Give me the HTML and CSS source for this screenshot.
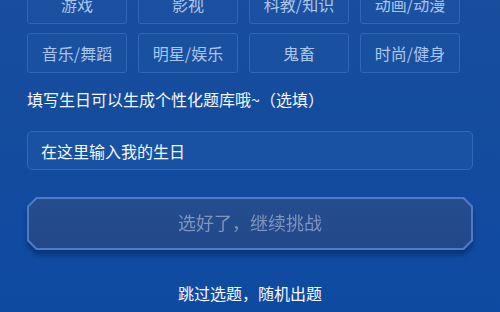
FILE: index.html
```html
<!DOCTYPE html>
<html lang="zh">
<head>
<meta charset="utf-8">
<link rel="stylesheet" href="styles.css">
</head>
<body>
<div class="page">
  <div class="tags">
    <div class="tag">游戏</div>
    <div class="tag">影视</div>
    <div class="tag">科教/知识</div>
    <div class="tag">动画/动漫</div>
    <div class="tag">音乐/舞蹈</div>
    <div class="tag">明星/娱乐</div>
    <div class="tag">鬼畜</div>
    <div class="tag">时尚/健身</div>
  </div>
  <div class="label">填写生日可以生成个性化题库哦~（选填）</div>
  <div class="input">在这里输入我的生日</div>
  <div class="btn-wrap">
    <div class="btn-border">
      <div class="btn">选好了，继续挑战</div>
    </div>
  </div>
  <div class="skip">跳过选题，随机出题</div>
</div>
</body>
</html>
```
FILE: styles.css
```css
html, body {
  margin: 0;
  padding: 0;
  width: 500px;
  height: 312px;
  overflow: hidden;
}
body {
  background: linear-gradient(180deg, #184e9c 0%, #134b9e 50%, #0f4aa2 100%);
  font-family: "Noto Sans CJK SC", "Noto Sans", sans-serif;
  color: #fff;
}
.page {
  padding: 0 27px;
  display: flex;
  flex-direction: column;
}
.tags {
  margin-top: -16px;
  width: 433px;
  display: grid;
  grid-template-columns: repeat(4, 100px);
  column-gap: 11px;
  row-gap: 9px;
}
.tag {
  height: 40px;
  box-sizing: border-box;
  border: 1px solid #3066b3;
  border-radius: 3px;
  background: rgba(40, 90, 170, 0.25);
  display: flex;
  align-items: center;
  justify-content: center;
  font-size: 16px;
  color: #aac6ee;
}
.label {
  margin-top: 15px;
  font-size: 16px;
  line-height: 22px;
  color: #f2f6ff;
}
.input {
  margin-top: 21px;
  height: 39px;
  box-sizing: border-box;
  border: 1px solid #3468b6;
  border-radius: 5px;
  background: rgba(40, 95, 175, 0.3);
  padding-left: 13px;
  display: flex;
  align-items: center;
  font-size: 16px;
  color: #f4f8ff;
}
.btn-wrap {
  margin-top: 27px;
  filter: drop-shadow(0 5px 2px rgba(6, 35, 90, 0.55));
}
.btn-border {
  height: 53px;
  background: #4b7cc6;
  clip-path: polygon(9px 0, calc(100% - 9px) 0, 100% 9px, 100% calc(100% - 9px), calc(100% - 9px) 100%, 9px 100%, 0 calc(100% - 9px), 0 9px);
  padding: 2px;
  box-sizing: border-box;
}
.btn {
  height: 100%;
  background: linear-gradient(180deg, #254d8e 0%, #22488a 100%);
  clip-path: polygon(8px 0, calc(100% - 8px) 0, 100% 8px, 100% calc(100% - 8px), calc(100% - 8px) 100%, 8px 100%, 0 calc(100% - 8px), 0 8px);
  display: flex;
  align-items: center;
  justify-content: center;
  padding-bottom: 3px;
  box-sizing: border-box;
  font-size: 18px;
  color: #7d94bf;
}
.skip {
  margin-top: 32px;
  text-align: center;
  font-size: 16px;
  line-height: 22px;
  color: #f4f8ff;
}
```
